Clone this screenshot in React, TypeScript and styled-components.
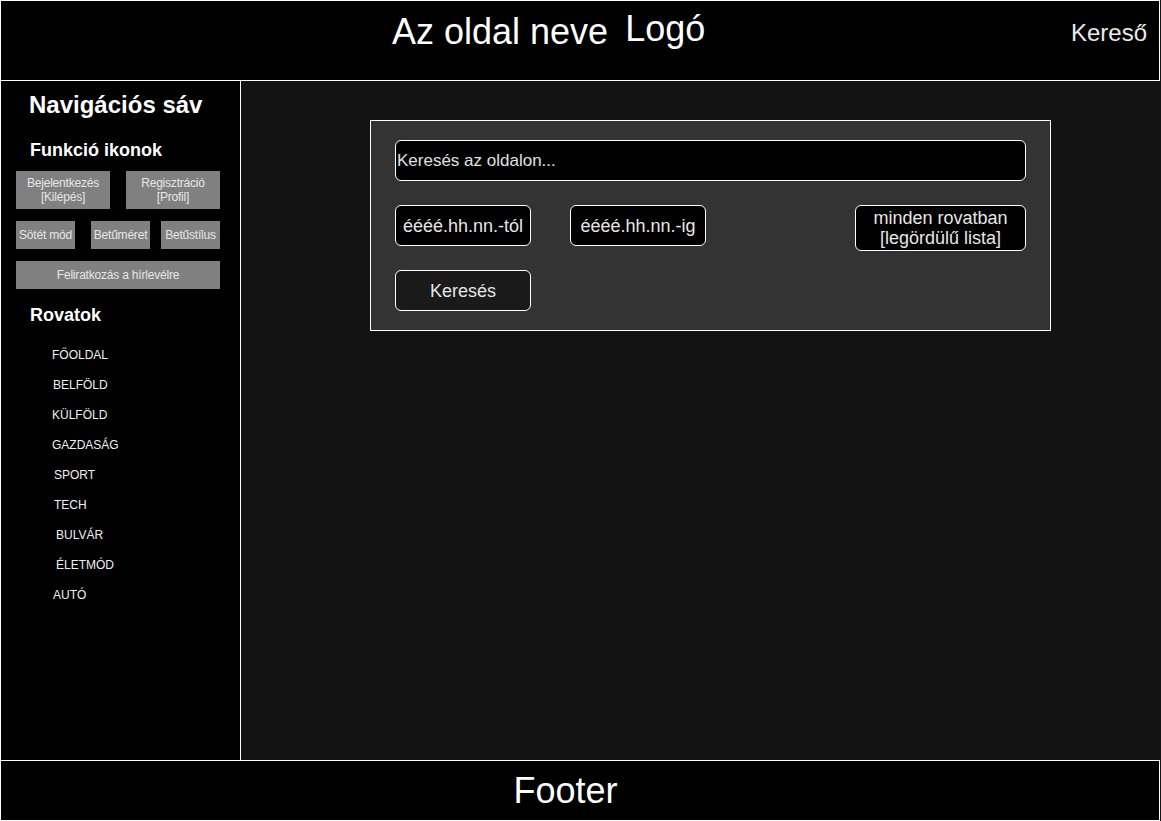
import styled, { createGlobalStyle } from "styled-components";

// Page wide defaults
const GlobalStyle = createGlobalStyle`
    html, body {
        margin: 0;
        padding: 0;
        background-color: rgb(20, 20, 20);
        font-family: "Liberation Sans", Arial, sans-serif;
    }
    * {
        box-sizing: border-box;
    }
`;

// Whole page frame
const Page = styled.div`
    display: grid;
    grid-template-rows: 81px 679px 61px;
    width: 1161px;
    height: 821px;
`;

// Top bar with site name, logo and search link
const Header = styled.header`
    display: flex;
    align-items: flex-start;
    width: 1160px;
    border: 1px solid white;
    background-color: black;
    color: white;
`;

const SiteTitle = styled.div`
    display: flex;
    align-items: baseline;
    gap: 17px;
    margin: 10px 0 0 391px;
`;

const SiteName = styled.span`
    font-size: 36px;
`;

const Logo = styled.span`
    font-size: 36px;
    position: relative;
    top: -3px;
`;

const SearchLink = styled.span`
    margin: 18px 12px 0 auto;
    font-size: 24px;
    color: rgb(235, 235, 235);
`;

// Middle part: sidebar plus content
const Body = styled.div`
    display: grid;
    grid-template-columns: 241px 919px;
`;

const Sidebar = styled.nav`
    display: flex;
    flex-direction: column;
    border-left: 1px solid white;
    border-right: 1px solid white;
    background-color: black;
    color: white;
    padding: 9px 0 0 15px;
`;

const NavTitle = styled.h1`
    margin: 0 0 0 13px;
    font-size: 24px;
    font-weight: bold;
    line-height: 30px;
`;

const SectionTitle = styled.h2<{ $top: number }>`
    margin: ${(p) => p.$top}px 0 0 14px;
    font-size: 18px;
    font-weight: bold;
    line-height: 22px;
`;

const ButtonRow = styled.div<{ $top: number }>`
    display: flex;
    width: 204px;
    margin-top: ${(p) => p.$top}px;
`;

const GrayButton = styled.div<{ $w: number; $h: number; $left?: number }>`
    display: flex;
    align-items: center;
    justify-content: center;
    width: ${(p) => p.$w}px;
    height: ${(p) => p.$h}px;
    margin-left: ${(p) => p.$left || 0}px;
    background-color: rgb(128, 128, 128);
    color: rgb(230, 230, 230);
    font-size: 12px;
    line-height: 14px;
    text-align: center;
    white-space: nowrap;
    letter-spacing: -0.2px;
`;

const SectionList = styled.ul`
    list-style: none;
    margin: 23px 0 0 0;
    padding: 0;
`;

const SectionItem = styled.li<{ $x: number }>`
    height: 30px;
    padding-left: ${(p) => p.$x}px;
    font-size: 12px;
    line-height: 12px;
    color: rgb(240, 240, 240);
`;

// Content area with the search panel
const Main = styled.main`
    background-color: rgb(19, 19, 19);
    padding: 39px 0 0 129px;
`;

const SearchPanel = styled.section`
    display: flex;
    flex-direction: column;
    width: 681px;
    height: 211px;
    border: 1px solid white;
    background-color: rgb(51, 51, 51);
    padding: 19px 24px 0 24px;
`;

const SearchInput = styled.div`
    display: flex;
    align-items: center;
    height: 41px;
    border: 1px solid white;
    border-radius: 6px;
    background-color: black;
    color: rgb(225, 225, 225);
    font-size: 17px;
    padding-left: 1px;
`;

const FieldRow = styled.div<{ $top: number }>`
    display: flex;
    align-items: flex-start;
    gap: 39px;
    margin-top: ${(p) => p.$top}px;
`;

const Field = styled.div<{ $w: number; $h: number; $bg?: string }>`
    display: flex;
    align-items: center;
    justify-content: center;
    width: ${(p) => p.$w}px;
    height: ${(p) => p.$h}px;
    border: 1px solid white;
    border-radius: 6px;
    background-color: ${(p) => p.$bg || "black"};
    color: rgb(230, 230, 230);
    font-size: 18px;
    line-height: 20px;
    text-align: center;
    white-space: nowrap;
`;

const Spacer = styled.div`
    flex: 1;
`;

const Footer = styled.footer`
    display: flex;
    align-items: center;
    justify-content: center;
    width: 1160px;
    border: 1px solid white;
    background-color: black;
    color: white;
    font-size: 36px;
    padding-right: 29px;
`;

const sections = [
    { name: "FŐOLDAL", x: 36 },
    { name: "BELFÖLD", x: 37 },
    { name: "KÜLFÖLD", x: 36 },
    { name: "GAZDASÁG", x: 36 },
    { name: "SPORT", x: 38 },
    { name: "TECH", x: 38 },
    { name: "BULVÁR", x: 40 },
    { name: "ÉLETMÓD", x: 40 },
    { name: "AUTÓ", x: 37 },
];

export default function App() {
    return (
        <>
            <GlobalStyle />
            <Page>
                <Header>
                    <SiteTitle>
                        <SiteName>Az oldal neve</SiteName>
                        <Logo>Logó</Logo>
                    </SiteTitle>
                    <SearchLink>Kereső</SearchLink>
                </Header>
                <Body>
                    <Sidebar>
                        <NavTitle>Navigációs sáv</NavTitle>
                        <SectionTitle $top={19}>Funkció ikonok</SectionTitle>
                        <ButtonRow $top={10}>
                            <GrayButton $w={94} $h={38}>Bejelentkezés<br />[Kilépés]</GrayButton>
                            <GrayButton $w={94} $h={38} $left={16}>Regisztráció<br />[Profil]</GrayButton>
                        </ButtonRow>
                        <ButtonRow $top={12}>
                            <GrayButton $w={59} $h={28}>Sötét mód</GrayButton>
                            <GrayButton $w={59} $h={28} $left={16}>Betűméret</GrayButton>
                            <GrayButton $w={59} $h={28} $left={11}>Betűstílus</GrayButton>
                        </ButtonRow>
                        <ButtonRow $top={12}>
                            <GrayButton $w={204} $h={28}>Feliratkozás a hírlevélre</GrayButton>
                        </ButtonRow>
                        <SectionTitle $top={15}>Rovatok</SectionTitle>
                        <SectionList>
                            {sections.map((s) => (
                                <SectionItem key={s.name} $x={s.x}>{s.name}</SectionItem>
                            ))}
                        </SectionList>
                    </Sidebar>
                    <Main>
                        <SearchPanel>
                            <SearchInput>Keresés az oldalon...</SearchInput>
                            <FieldRow $top={24}>
                                <Field $w={136} $h={41}>éééé.hh.nn.-tól</Field>
                                <Field $w={136} $h={41}>éééé.hh.nn.-ig</Field>
                                <Spacer />
                                <Field $w={171} $h={46}>minden rovatban<br />[legördülű lista]</Field>
                            </FieldRow>
                            <FieldRow $top={19}>
                                <Field $w={136} $h={41} $bg="rgb(26, 26, 26)">Keresés</Field>
                            </FieldRow>
                        </SearchPanel>
                    </Main>
                </Body>
                <Footer>Footer</Footer>
            </Page>
        </>
    );
}
